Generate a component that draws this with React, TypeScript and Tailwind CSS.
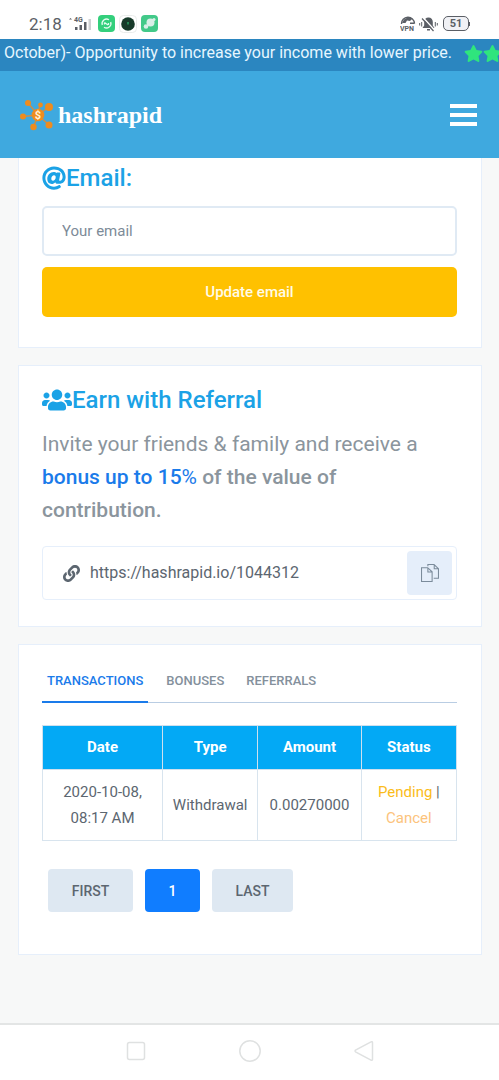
import React from "react";
import { FaAt, FaLink, FaStar, FaUsers } from "react-icons/fa";
import { TfiFiles } from "react-icons/tfi";

function StatusBar() {
  return (
    <div className="flex items-center justify-between h-[39px] pt-2 pl-[29px] pr-[29px] bg-white text-[#5b5f66]">
      <div className="flex items-center">
        <span className="text-[17px] leading-6">2:18</span>
        <svg className="ml-[7px]" width="23" height="16" viewBox="0 0 23 16">
          <path d="M0 3.5 1.5 2 3 3.500z" fill="#5b5f66" />
          <text x="5" y="6" fontSize="7" fontWeight="700" fill="#5b5f66">
            4G
          </text>
          <path
            d="M6 11h2.500v3H6zM10.500 9H13v5h-2.500zM15 6h2.500v8H15z"
            fill="#5b5f66"
          />
          <path d="M19.500 3H22v11h-2.500z" fill="#cfd1d4" />
        </svg>
        <svg className="ml-1.5" width="17" height="17" viewBox="0 0 17 17">
          <rect width="17" height="17" rx="4" fill="#33cf7c" />
          <g fill="none" stroke="#e4fbef" strokeWidth="1.300">
            <path d="M4.300 10A4.500 4.500 0 0 1 11 4.800" />
            <path d="M12.700 7A4.500 4.500 0 0 1 6 12.200" />
            <path d="M6.500 7.500 10 10M6.500 7.500v2M10.500 10V8" />
          </g>
        </svg>
        <svg className="ml-1" width="18" height="18" viewBox="0 0 18 18">
          <rect
            x=".5"
            y=".5"
            width="17"
            height="17"
            rx="4"
            fill="#fff"
            stroke="#e9eceb"
          />
          <circle cx="9" cy="9" r="6.800" fill="#173a2a" />
          <path d="M9 7v2.500" stroke="#33cf7c" />
        </svg>
        <svg className="ml-1" width="17" height="17" viewBox="0 0 17 17">
          <rect width="17" height="17" rx="4" fill="#42c989" />
          <circle cx="9.500" cy="7.500" r="4" fill="#d9efe8" />
          <circle cx="5" cy="11.500" r="2.300" fill="#d9efe8" />
          <circle cx="13" cy="4.500" r="1.500" fill="#d9efe8" />
        </svg>
      </div>
      <div className="flex items-center">
        <svg width="16" height="16" viewBox="0 0 16 16">
          <path
            d="M1.500 8A6.500 6.500 0 0 1 14.500 7.500"
            fill="none"
            stroke="#5b5f66"
            strokeWidth="1.400"
          />
          <path d="M4 3.500 8.500 1l4 1.500L10 5 7 4.500 5.500 7H2z" fill="#5b5f66" />
          <path d="M10 6.500h4.500V8H10z" fill="#5b5f66" />
          <text x="0" y="15" fontSize="7" fontWeight="700" fill="#5b5f66">
            VPN
          </text>
        </svg>
        <svg className="ml-[3px]" width="19" height="16" viewBox="0 0 19 16">
          <path
            d="M9.500 1.500c-2.600 0-4.300 1.900-4.300 4.500v3.500L3.500 12h12l-1.700-2.500V6c0-2.600-1.700-4.500-4.300-4.500zM8 13h3v1.500H8z"
            fill="#5b5f66"
          />
          <path d="M4 1.500 15.500 14" stroke="#fff" strokeWidth="1.500" />
          <path d="M3 2.500 14.500 15" stroke="#5b5f66" strokeWidth="1.200" />
          <path
            d="M.7 7v2.500M2.700 6v4.500M16.300 6v4.500M18.300 7v2.500"
            stroke="#5b5f66"
          />
        </svg>
        <div className="flex items-center ml-[5px]">
          <span className="flex items-center justify-center w-[26px] h-[15px] border border-[#5b5f66] rounded-[5px] bg-[#f0f1f5] text-[11px] leading-3 font-bold">
            51
          </span>
          <span className="w-px h-1 bg-[#5b5f66]" />
        </div>
      </div>
    </div>
  );
}

function Logo() {
  return (
    <a href="#" className="flex items-center text-white">
      <svg width="34" height="32" viewBox="0 0 34 32">
        <g stroke="#c98f4b" strokeWidth="1.500">
          <path d="M18 16 8 4M18 16 3 17.500M18 16 13.500 28M18 16l11 10M18 16 29 8M18 16l2-10" />
        </g>
        <g fill="#ee8c1e">
          <circle cx="8" cy="4" r="3" />
          <circle cx="3" cy="17.500" r="3" />
          <circle cx="13.500" cy="28" r="3.200" />
          <circle cx="29" cy="26" r="3.500" />
          <circle cx="29" cy="8" r="4" />
          <circle cx="20.500" cy="6" r="2.400" />
          <circle cx="18" cy="16" r="6.300" />
        </g>
        <text
          x="18"
          y="20"
          fontSize="11"
          fontWeight="700"
          textAnchor="middle"
          fill="#fff3d9"
        >
          $
        </text>
      </svg>
      <span className="pl-1 font-['Liberation_Serif',serif] font-bold text-2xl leading-8">
        hashrapid
      </span>
    </a>
  );
}

function App() {
  return (
    <div className="flex flex-col min-h-screen overflow-x-hidden bg-[#f7f8f8] font-['Roboto',sans-serif] text-[#5c6670]">
      <StatusBar />
      <div className="flex items-center h-8 pl-1 pb-1 overflow-hidden whitespace-nowrap bg-[#2b86c0] text-[#e6f6ff] text-base">
        <span>October)- Opportunity to increase your income with lower price.</span>
        <span className="flex pl-3 text-[#2fe57d] text-[19px]">
          <FaStar className="shrink-0" />
          <FaStar className="shrink-0" />
          <FaStar className="shrink-0" />
        </span>
      </div>
      <header className="flex items-center justify-between h-[87px] pl-5 pr-[22px] bg-[#3fa9df]">
        <Logo />
        <button aria-label="Menu" className="flex flex-col gap-[5px]">
          <span className="w-[27px] h-1 bg-white" />
          <span className="w-[27px] h-1 bg-white" />
          <span className="w-[27px] h-1 bg-white" />
        </button>
      </header>

      <main className="flex flex-col flex-1 gap-[17px] pl-[18px] pr-[17px] pb-[68px]">
        <section className="pl-[23px] pr-6 pt-1 pb-[30px] bg-white border border-t-0 border-[#e6effb]">
          <h2 className="flex items-center text-2xl leading-8 font-medium text-[#1ba2e6]">
            <FaAt />
            <label htmlFor="email">Email:</label>
          </h2>
          <input
            id="email"
            type="email"
            placeholder="Your email"
            className="block w-full h-[50px] mt-3 px-[18px] rounded-[5px] border-2 border-[#e0eaf4] bg-white text-[15px] placeholder:text-[#7d8b98]"
          />
          <button className="block w-full h-[50px] mt-[11px] rounded-[5px] bg-[#ffc100] text-[15px] font-medium text-[#fffbe8]">
            Update email
          </button>
        </section>

        <section className="pl-[23px] pr-6 pt-[18px] pb-[26px] bg-white border border-[#e6effb]">
          <h2 className="flex items-center text-2xl leading-8 font-medium text-[#1ba2e6]">
            <FaUsers className="w-[30px] shrink-0" />
            Earn with Referral
          </h2>
          <p className="mt-3 text-[21px] leading-[33px] font-medium text-[#8b959d]">
            <span className="font-normal">
              Invite your friends &amp; family and receive a
            </span>{" "}
            <span className="text-[#1a7bea]">
              bonus up to 15<span className="font-normal">%</span>
            </span>{" "}
            of the value of contribution.
          </p>
          <div className="flex items-center h-[54px] mt-[19px] pl-5 pr-1 rounded border border-[#e6effb]">
            <FaLink className="shrink-0 text-[17px]" />
            <input
              readOnly
              aria-label="Referral link"
              value="https://hashrapid.io/1044312"
              className="flex-1 min-w-0 ml-2.5 text-base"
            />
            <button
              aria-label="Copy link"
              className="flex items-center justify-center w-[45px] h-11 rounded bg-[#e5eefa] text-[#7b8b9b]"
            >
              <TfiFiles size={18} />
            </button>
          </div>
        </section>

        <section className="pl-[23px] pr-6 pt-4 pb-[42px] bg-white border border-[#e6effb]">
          <div
            role="tablist"
            className="flex h-[42px] border-b border-[#b9cde3] text-[13px] font-medium text-[#84909c]"
          >
            <button
              role="tab"
              aria-selected="true"
              className="h-[42px] px-[5px] border-b-2 border-[#1a7bea] text-[#1a7bea]"
            >
              TRANSACTIONS
            </button>
            <button
              role="tab"
              aria-selected="false"
              className="h-[42px] ml-[18px] border-b-2 border-transparent"
            >
              BONUSES
            </button>
            <button
              role="tab"
              aria-selected="false"
              className="h-[42px] ml-[22px] border-b-2 border-transparent"
            >
              REFERRALS
            </button>
          </div>

          <table className="w-full mt-[22px] border-collapse table-fixed text-[15px] text-center">
            <thead>
              <tr className="h-11 bg-[#03a9f5] text-white">
                <th className="w-[29%] border border-[#cfe0ee]">Date</th>
                <th className="w-[23%] border border-[#cfe0ee]">Type</th>
                <th className="w-[25%] border border-[#cfe0ee]">Amount</th>
                <th className="w-[23%] border border-[#cfe0ee]">Status</th>
              </tr>
            </thead>
            <tbody>
              <tr className="h-[71px] leading-[26px]">
                <td className="px-4 border border-[#d8e4ee]">
                  2020-10-08, 08:17 AM
                </td>
                <td className="border border-[#d8e4ee]">Withdrawal</td>
                <td className="border border-[#d8e4ee]">0.00270000</td>
                <td className="px-2 border border-[#d8e4ee]">
                  <span className="text-[#fbbc1a]">Pending</span> |{" "}
                  <a href="#" className="text-[#fcc37c]">
                    Cancel
                  </a>
                </td>
              </tr>
            </tbody>
          </table>

          <div className="flex gap-3 mt-7 pl-1.5 text-sm font-medium">
            <button className="w-[85px] h-[43px] rounded bg-[#dee8f2]">
              FIRST
            </button>
            <button className="w-[55px] h-[43px] rounded bg-[#107dff] text-white">
              1
            </button>
            <button className="w-[81px] h-[43px] rounded bg-[#dee8f2]">
              LAST
            </button>
          </div>
        </section>
      </main>

      <nav className="flex items-center justify-center gap-[90px] h-[57px] pb-[3px] border-t-2 border-[#e3e5e5] bg-white">
        <button aria-label="Recent apps">
          <svg width="24" height="24" viewBox="0 0 24 24" fill="none" stroke="#dfe1e1" strokeWidth="1.500">
            <rect x="3.500" y="3.500" width="17" height="17" rx="2" />
          </svg>
        </button>
        <button aria-label="Home">
          <svg width="24" height="24" viewBox="0 0 24 24" fill="none" stroke="#dfe1e1" strokeWidth="1.500">
            <circle cx="12" cy="12" r="10.200" />
          </svg>
        </button>
        <button aria-label="Back">
          <svg width="24" height="24" viewBox="0 0 24 24" fill="none" stroke="#dfe1e1" strokeWidth="1.500">
            <path d="M19 2.800 3.500 11.200a1 1 0 0 0 0 1.600L19 21.200a1 1 0 0 0 1.500-.8V3.600A1 1 0 0 0 19 2.800z" />
          </svg>
        </button>
      </nav>
    </div>
  );
}

export default App;
